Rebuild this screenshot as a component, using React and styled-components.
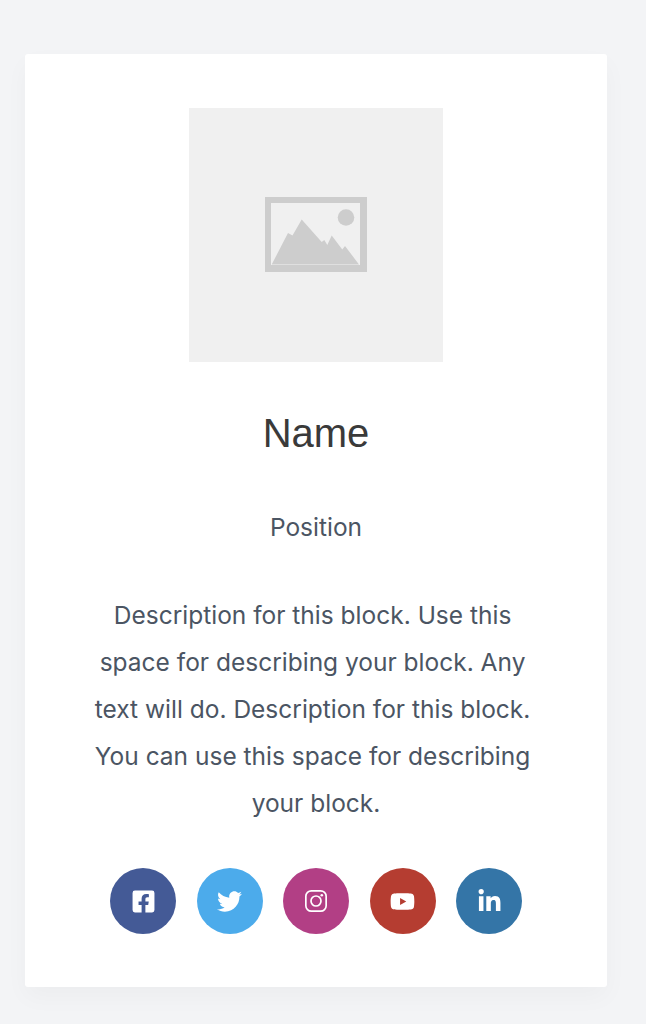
import styled, { createGlobalStyle } from "styled-components";
import { FaFacebookSquare, FaTwitter, FaYoutube, FaLinkedinIn } from "react-icons/fa";

const GlobalStyle = createGlobalStyle`
  html, body {
    margin: 0;
    padding: 0;
    background: #f3f4f6;
    font-family: Inter, "Liberation Sans", sans-serif;
  }
`;

const Page = styled.div`
  width: 646px;
  height: 1024px;
  box-sizing: border-box;
  padding: 54px 39px 37px 25px;
  overflow: hidden;
`;

const Card = styled.section`
  height: 933px;
  box-sizing: border-box;
  background: #ffffff;
  border-radius: 3px;
  box-shadow: 0 10px 25px rgba(0, 0, 0, 0.03);
  padding-top: 54px;
  display: flex;
  flex-direction: column;
  align-items: center;
`;

const Placeholder = styled.div`
  width: 254px;
  height: 254px;
  box-sizing: border-box;
  padding-bottom: 2px;
  background: #f0f0f0;
  display: flex;
  align-items: center;
  justify-content: center;
`;

const Name = styled.h2`
  margin: 47px 0 0;
  font-family: "Liberation Sans", Arial, sans-serif;
  font-size: 40px;
  line-height: 48px;
  font-weight: 400;
  color: #3a3a3a;
`;

const Position = styled.p`
  margin: 54px 0 0;
  font-size: 24.5px;
  line-height: 32px;
  color: #4b5563;
`;

const Description = styled.p`
  margin: 49px 0 0;
  width: 454px;
  font-size: 24.5px;
  line-height: 47px;
  text-align: center;
  white-space: break-spaces;
  color: #4b5563;
`;

const Socials = styled.div`
  margin-top: 41px;
  display: flex;
  gap: 20.5px;
`;

const Social = styled.a`
  width: 66px;
  height: 66px;
  border-radius: 50%;
  background: ${(p) => p.$bg};
  color: #ffffff;
  display: flex;
  align-items: center;
  justify-content: center;
  font-size: 25px;
`;

const InstagramIcon = () => (
  <svg width="22" height="22" viewBox="0 0 22 22" fill="none" stroke="currentColor" strokeWidth="1.7">
    <rect x="0.850" y="0.850" width="20.300" height="20.300" rx="5.500" />
    <circle cx="11" cy="11" r="5" />
    <circle cx="16.800" cy="5.200" r="1.300" fill="currentColor" stroke="none" />
  </svg>
);

const networks = [
  { Icon: FaFacebookSquare, bg: "#445a96" },
  { Icon: FaTwitter, bg: "#4cabeb" },
  { Icon: InstagramIcon, bg: "#b23f85" },
  { Icon: FaYoutube, bg: "#b53d31" },
  { Icon: FaLinkedinIn, bg: "#3475a7" },
];

const App = () => (
  <Page>
    <GlobalStyle />
    <Card>
      <Placeholder>
        <svg width="102" height="75" viewBox="0 0 102 75">
          <path fill="#cdcdcd" fillRule="evenodd" d="M0 0h102v75H0zM6 6v62h89V6z" />
          <circle cx="81" cy="20.500" r="8.300" fill="#cdcdcd" />
          <path
            fill="#cdcdcd"
            d="M6.700 67.500 L23 36 L27.500 38.500 L36.700 22.500 L56.700 45 L59.300 43 L62.300 48 L66.700 38.500 L77.300 52.500 L80 49 L94 67.500z"
          />
        </svg>
      </Placeholder>
      <Name>Name</Name>
      <Position>Position</Position>
      <Description>
        Description for this block. Use this space for describing your block. Any text will do. Description for this block. You can use this space for describing your block.
      </Description>
      <Socials>
        {networks.map(({ Icon, bg }) => (
          <Social key={bg} $bg={bg}>
            <Icon />
          </Social>
        ))}
      </Socials>
    </Card>
  </Page>
);

export default App;
